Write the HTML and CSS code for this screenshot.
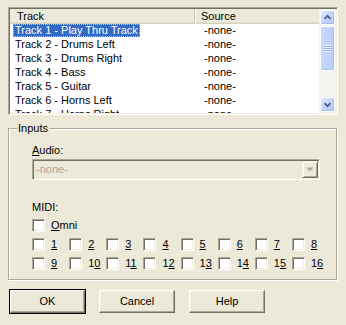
FILE: index.html
```html
<!DOCTYPE html>
<html>
<head>
<meta charset="utf-8">
<link rel="stylesheet" href="styles.css">
</head>
<body>
<div class="dialog">
  <div class="listview">
    <div class="lv-main">
      <div class="lv-header">
        <div class="hcol c1">Track</div>
        <div class="hcol c2">Source</div>
      </div>
      <div class="lv-rows">
        <div class="row"><div class="cell c1"><span class="sel">Track 1 - Play Thru Track</span></div><div class="cell c2">-none-</div></div>
        <div class="row"><div class="cell c1"><span class="txt">Track 2 - Drums Left</span></div><div class="cell c2">-none-</div></div>
        <div class="row"><div class="cell c1"><span class="txt">Track 3 - Drums Right</span></div><div class="cell c2">-none-</div></div>
        <div class="row"><div class="cell c1"><span class="txt">Track 4 - Bass</span></div><div class="cell c2">-none-</div></div>
        <div class="row"><div class="cell c1"><span class="txt">Track 5 - Guitar</span></div><div class="cell c2">-none-</div></div>
        <div class="row"><div class="cell c1"><span class="txt">Track 6 - Horns Left</span></div><div class="cell c2">-none-</div></div>
        <div class="row"><div class="cell c1"><span class="txt">Track 7 - Horns Right</span></div><div class="cell c2">-none-</div></div>
      </div>
    </div>
    <div class="scrollbar">
      <div class="sb-btn"><svg width="15" height="15" viewBox="0 0 15 15"><polyline points="4,9 7.5,5.5 11,9" fill="none" stroke="#4d6185" stroke-width="2"/></svg></div>
      <div class="sb-thumb"><div class="grip"></div></div>
      <div class="sb-track"></div>
      <div class="sb-btn"><svg width="15" height="15" viewBox="0 0 15 15"><polyline points="4,6 7.5,9.5 11,6" fill="none" stroke="#4d6185" stroke-width="2"/></svg></div>
    </div>
  </div>

  <div class="group">
    <div class="group-title">Inputs</div>
    <div class="label"><u>A</u>udio:</div>
    <div class="combo">
      <div class="combo-text">-none-</div>
      <div class="combo-btn"><svg width="8" height="5" viewBox="0 0 8 5"><polygon points="0.5,0.5 7.5,0.5 4,4.5" fill="#aca899"/></svg></div>
    </div>
    <div class="label midi">MIDI:</div>
    <div class="check omni"><span class="box"></span><span class="clabel"><u>O</u>mni</span></div>
    <div class="grid">
      <div class="check"><span class="box"></span><span class="clabel"><u>1</u></span></div>
      <div class="check"><span class="box"></span><span class="clabel"><u>2</u></span></div>
      <div class="check"><span class="box"></span><span class="clabel"><u>3</u></span></div>
      <div class="check"><span class="box"></span><span class="clabel"><u>4</u></span></div>
      <div class="check"><span class="box"></span><span class="clabel"><u>5</u></span></div>
      <div class="check"><span class="box"></span><span class="clabel"><u>6</u></span></div>
      <div class="check"><span class="box"></span><span class="clabel"><u>7</u></span></div>
      <div class="check"><span class="box"></span><span class="clabel"><u>8</u></span></div>
      <div class="check"><span class="box"></span><span class="clabel"><u>9</u></span></div>
      <div class="check"><span class="box"></span><span class="clabel">1<u>0</u></span></div>
      <div class="check"><span class="box"></span><span class="clabel">1<u>1</u></span></div>
      <div class="check"><span class="box"></span><span class="clabel">1<u>2</u></span></div>
      <div class="check"><span class="box"></span><span class="clabel">1<u>3</u></span></div>
      <div class="check"><span class="box"></span><span class="clabel">1<u>4</u></span></div>
      <div class="check"><span class="box"></span><span class="clabel">1<u>5</u></span></div>
      <div class="check"><span class="box"></span><span class="clabel">1<u>6</u></span></div>
    </div>
  </div>

  <div class="buttons">
    <div class="btn default"><div class="btn-inner">OK</div></div>
    <div class="btn">Cancel</div>
    <div class="btn help">Help</div>
  </div>
</div>
</body>
</html>
```

FILE: styles.css
```css
html, body {
  margin: 0;
  padding: 0;
}
body {
  background: #ece9d8;
  width: 346px;
  height: 325px;
  overflow: hidden;
  font-family: "Liberation Sans", Arial, sans-serif;
  font-size: 11px;
  line-height: 13px;
  color: #000;
}
.dialog {
  padding: 7px 0 0 8px;
}
u {
  text-decoration: underline;
  text-underline-offset: 1px;
}

/* list view */
.listview {
  box-sizing: border-box;
  width: 330px;
  height: 108px;
  display: flex;
  background: #fff;
  border-style: solid;
  border-width: 1px;
  border-color: #aca899 #fff #fff #aca899;
  box-shadow: inset 1px 1px #716f64, inset -1px -1px #f1efe2;
  padding: 1px;
  overflow: hidden;
}
.lv-main {
  flex: 1;
  overflow: hidden;
}
.lv-header {
  display: flex;
  height: 15px;
  background: #ebeadb;
  box-shadow: inset 0 -1px #d6d2c2, inset 0 -2px #e2decd;
}
.hcol {
  box-sizing: border-box;
  height: 15px;
  line-height: 14px;
}
.c1 {
  width: 185px;
  flex: none;
}
.c2 {
  flex: 1;
}
.hcol.c1 {
  padding-left: 7px;
  border-right: 1px solid #c7c5b2;
  box-shadow: 1px 0 #fff;
}
.hcol.c2 {
  padding-left: 6px;
}
.row {
  display: flex;
  height: 14px;
  line-height: 13px;
}
.cell.c1 {
  padding-left: 3px;
}
.cell.c2 {
  padding-left: 6px;
}
.txt, .sel {
  display: inline-block;
  padding: 0 2px;
  height: 13px;
}
.sel {
  background: #316ac5;
  color: #fff;
  outline: 1px dotted #e8c87a;
  outline-offset: -1px;
}

/* scrollbar */
.scrollbar {
  width: 17px;
  flex: none;
  display: flex;
  flex-direction: column;
  background: #f4f3ee;
}
.sb-btn, .sb-thumb {
  box-sizing: border-box;
  margin: 1px 1px 0 1px;
  border: 1px solid #fff;
  border-radius: 2px;
  background: linear-gradient(135deg, #dfe8fe 0%, #c6d5fb 50%, #b4c8f6 100%);
  box-shadow: inset -1px -1px #a7bdf1;
}
.sb-btn {
  height: 15px;
  display: flex;
  align-items: center;
  justify-content: center;
}
.sb-btn:last-child {
  margin-bottom: 1px;
}
.sb-thumb {
  height: 45px;
  display: flex;
  align-items: center;
  justify-content: center;
  background: linear-gradient(90deg, #cad8fc 0%, #c3d3fc 50%, #b8cbf8 100%);
}
.grip {
  width: 6px;
  height: 7px;
  background: repeating-linear-gradient(180deg, #eef4fe 0, #eef4fe 1px, #8cb0f8 1px, #8cb0f8 2px);
}
.sb-track {
  flex: 1;
}

/* group box */
.group {
  position: relative;
  box-sizing: border-box;
  width: 329px;
  height: 152px;
  margin-top: 13px;
  border: 1px solid #aca899;
  box-shadow: inset 1px 1px #fff, 1px 1px #fff;
  padding: 15px 0 0 23px;
}
.group-title {
  position: absolute;
  top: -7px;
  left: 8px;
  padding: 0 1px;
  background: #ece9d8;
  line-height: 13px;
}
.label {
  height: 13px;
}
.combo {
  box-sizing: border-box;
  margin-top: 2px;
  width: 288px;
  height: 21px;
  display: flex;
  align-items: center;
  border-style: solid;
  border-width: 1px;
  border-color: #aca899 #fff #fff #aca899;
  box-shadow: inset 1px 1px #716f64, inset -1px -1px #f1efe2;
  padding: 1px;
}
.combo-text {
  flex: 1;
  color: #aca899;
  padding-left: 2px;
}
.combo-btn {
  box-sizing: border-box;
  width: 16px;
  height: 17px;
  display: flex;
  align-items: center;
  justify-content: center;
  border-style: solid;
  border-width: 1px;
  border-color: #f1efe2 #716f64 #716f64 #f1efe2;
  box-shadow: inset 1px 1px #fff, inset -1px -1px #aca899;
}
.label.midi {
  margin-top: 21px;
}
.check {
  display: flex;
  align-items: center;
  height: 13px;
}
.check.omni {
  margin-top: 5px;
}
.box {
  box-sizing: border-box;
  width: 13px;
  height: 13px;
  flex: none;
  background: #fff;
  border-style: solid;
  border-width: 1px;
  border-color: #aca899 #fff #fff #aca899;
  box-shadow: inset 1px 1px #716f64, inset -1px -1px #f1efe2;
}
.clabel {
  margin-left: 6px;
}
.grid {
  margin-top: 6px;
  display: grid;
  grid-template-columns: repeat(8, 37.15px);
  row-gap: 6px;
}

/* buttons */
.buttons {
  display: flex;
  align-items: flex-start;
  margin-top: 9px;
  padding-left: 1px;
}
.btn {
  box-sizing: border-box;
  width: 76px;
  height: 23px;
  display: flex;
  align-items: center;
  justify-content: center;
  margin-top: 1px;
  margin-left: 13px;
  border-style: solid;
  border-width: 1px;
  border-color: #fff #716f64 #716f64 #fff;
  box-shadow: inset -1px -1px #aca899, inset 1px 1px #f1efe2;
}
.btn.help {
  margin-left: 14px;
}
.btn.default {
  width: 77px;
  height: 25px;
  margin: 0;
  border: 1px solid #000;
  box-shadow: none;
  padding: 0;
}
.btn-inner {
  box-sizing: border-box;
  width: 100%;
  height: 100%;
  display: flex;
  align-items: center;
  justify-content: center;
  border-style: solid;
  border-width: 1px;
  border-color: #fff #716f64 #716f64 #fff;
  box-shadow: inset -1px -1px #aca899, inset 1px 1px #f1efe2;
}
```
